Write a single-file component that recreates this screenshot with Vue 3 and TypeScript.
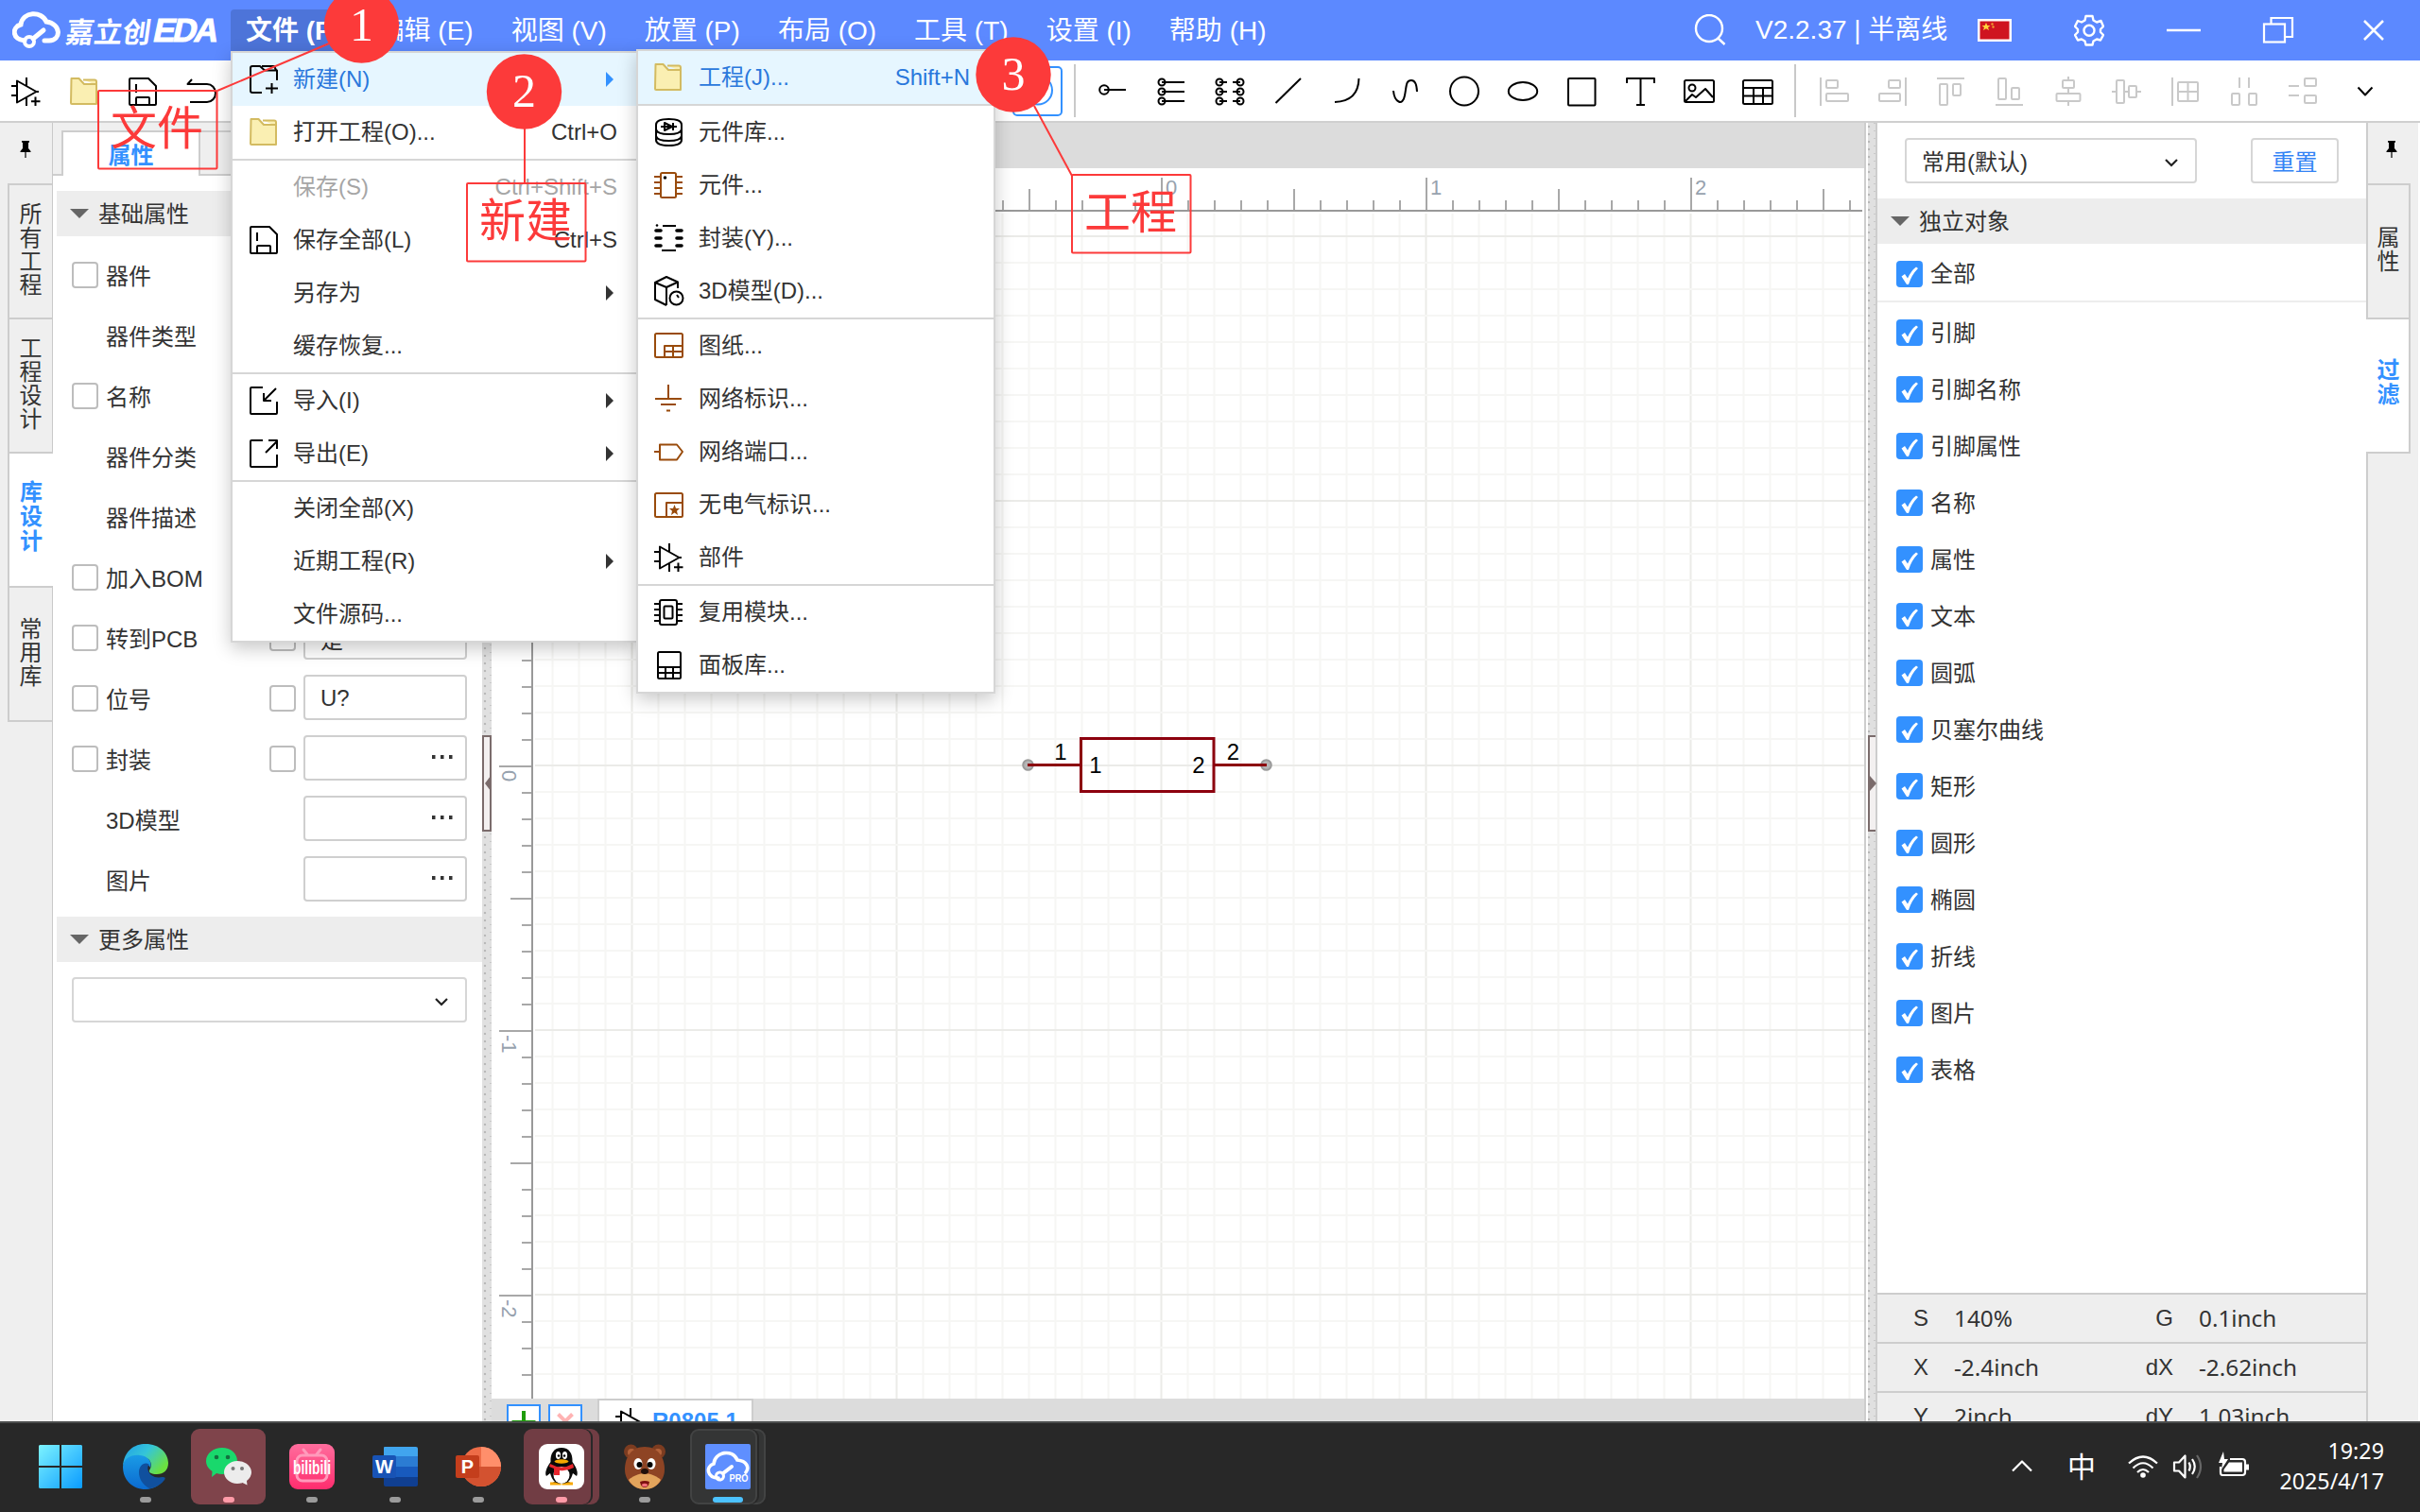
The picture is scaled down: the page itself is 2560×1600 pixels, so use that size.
<script setup lang="ts">
interface MenuItem {
  label: string
  icon?: string
  key?: string
  sub?: boolean
  active?: boolean
  disabled?: boolean
  divider?: boolean
}
interface PropRow {
  label: string
  check?: boolean
  check2?: boolean
  field?: 'text' | 'dots'
  value?: string
}

const opamp =
  '<path d="M7 4.5V27.5L27.5 16ZM1 10H7M1 20H7M17 1V10M17 22V31M27.5 16H30"/><path d="M26.5 21.5V31M22 26.3H31.5"/>'
const folder =
  '<path d="M15 3.5H27Q29 3.5 29 5.5V9" fill="#faefb2" stroke="#d3bb61"/><path d="M2.5 2H10.5L16 8H29V29H3Q2 29 2 28Z" fill="#faefb2" stroke="#d3bb61"/>'
const save =
  '<path d="M2 3Q2 2 3 2H22L30 10V29Q30 30 29 30H3Q2 30 2 29Z M9 30V23Q9 22 10 22H22Q23 22 23 23V30M9 8V17"/>'
const chipPins = 'M1 7H7M1 13H7M1 19H7M1 25H7M25 7H31M25 13H31M25 19H31M25 25H31'
const brown = (d: string) => `<g stroke="#994b0b">${d}</g>`

const icons: Record<string, string> = {
  opamp,
  folder,
  save,
  undo: '<path d="M6 3L1.5 8H22A9 9.5 0 0 1 22 27H4"/>',
  newproj: '<path d="M14 30H4Q2 30 2 28V4Q2 2 4 2H12L17 6.5H30V17M14 2H27L29 6M24.5 20V31M18 25.5H31"/>',
  import: '<path d="M15 2H3Q2 2 2 3V29Q2 30 3 30H29Q30 30 30 29V17M29 3L16 16M16 8V16H24"/>',
  export: '<path d="M15 2H3Q2 2 2 3V29Q2 30 3 30H29Q30 30 30 29V17M18 15L30 3M21 2H30V11"/>',
  lib: '<path d="M3 8Q3 2 16.500 2T30 8V24Q30 30 16.500 30T3 24ZM3 13Q4 18 16.500 18T30 13M3 20Q4 25 16.500 25T30 20M8 10H25M12 6V14L20 10ZM21 6V14"/>',
  chip: brown(`<rect x="8" y="3" width="16" height="26" rx="1.500"/><path d="${chipPins}"/>`) + '<circle cx="12.500" cy="8" r="1.800" fill="#000" stroke="none"/>',
  footprint:
    '<path d="M10 3H24M9 29H24"/><path d="M3 8H8M3 16H8M3 24H8M25 8H30M25 16H30M25 24H30" stroke-width="3.600" stroke-linecap="round"/><circle cx="4" cy="2.500" r="1.300" fill="#000" stroke="none"/>',
  model: '<path d="M14 31L2 25V7L14 1L26 6.500V13M2 7L14 12L26 6.500M14 12V31"/><circle cx="24.500" cy="23.500" r="7"/><path d="M25 20L27 23"/>',
  sheet: brown('<rect x="2" y="3" width="29" height="25" rx="1.500"/><path d="M12 28V16H31M12 22H31M21 16V28"/>'),
  ground: brown('<path d="M16 1V16M2 16H30M8 22H24M14 28.500H18"/>'),
  port: brown('<path d="M1 16H7M7 8.500H25L31 16L25 24.500H7Z"/>'),
  noelec: brown(
    '<rect x="2" y="4" width="29" height="25" rx="1.500"/><path d="M14 29V14H31"/><path d="M22.500 16L24 20H28L25 22.700L26 27L22.500 24.500L19 27L20 22.700L17 20H21Z" fill="#994b0b" stroke="none"/>',
  ),
  module: `<rect x="7" y="3" width="18" height="26" rx="2"/><rect x="11.500" y="9.500" width="9" height="13" rx="1"/><path d="${chipPins}"/>`,
  panel: '<rect x="5" y="2" width="24" height="28" rx="1.500"/><path d="M5 18H29M5 24H29M13 18V30M21 18V30"/>',
  pin: '<circle cx="7" cy="14" r="4.800"/><path d="M7 14H30"/>',
  pins: '<circle cx="6" cy="6" r="3.500"/><circle cx="6" cy="16" r="3.500"/><circle cx="6" cy="26" r="3.500"/><path d="M6 6H30M6 16H30M6 26H30"/>',
  pinarr:
    '<circle cx="5" cy="6" r="3.500"/><circle cx="5" cy="16" r="3.500"/><circle cx="5" cy="26" r="3.500"/><circle cx="27" cy="6" r="3.500"/><circle cx="27" cy="16" r="3.500"/><circle cx="27" cy="26" r="3.500"/><path d="M5 6H13M5 16H13M5 26H13M19 6H27M19 16H27M19 26H27"/>',
  line: '<path d="M2.500 28L29 2"/>',
  arc: '<path d="M3 27Q28 26 28.500 2"/>',
  bezier: '<path d="M3 15C4 27 13 32 15 20C17 10 16 4 22 4Q27.500 4 28 16"/>',
  circle: '<circle cx="16" cy="15.500" r="15"/>',
  ellipse: '<ellipse cx="16" cy="15.500" rx="15.200" ry="9.500"/>',
  rect: '<rect x="2" y="2" width="28.500" height="28.500" rx="1"/>',
  text: '<path d="M2 7V2H31V7M16.500 2V30M12 30H21"/>',
  image: '<rect x="1" y="4" width="31" height="23" rx="1.500"/><circle cx="9" cy="12" r="3.500"/><path d="M2 26L9 19L13 22L23 13L31 22"/>',
  table: '<rect x="1" y="4" width="31" height="25" rx="1.500"/><path d="M1 12H32M1 20.500H32M12 12V29M22 12V29"/>',
  al1: '<path d="M2 1V31"/><rect x="8" y="4" width="12" height="8" rx="1"/><rect x="8" y="18" width="23" height="8" rx="1"/>',
  al2: '<path d="M30 1V31"/><rect x="12" y="4" width="12" height="8" rx="1"/><rect x="2" y="18" width="22" height="8" rx="1"/>',
  al3: '<path d="M1 2H30"/><rect x="4" y="8" width="8" height="22" rx="1"/><rect x="18" y="8" width="8" height="12" rx="1"/>',
  al4: '<path d="M1 30H30"/><rect x="4" y="2" width="8" height="22" rx="1"/><rect x="18" y="12" width="8" height="12" rx="1"/>',
  al5: '<path d="M16 0V4M16 12V18M16 26V31"/><rect x="10" y="4" width="12" height="8" rx="1"/><rect x="3.500" y="18" width="25" height="8" rx="1"/>',
  al6: '<path d="M0 16H4M13 16H18M26 16H31"/><rect x="5" y="4" width="8" height="24" rx="1"/><rect x="18" y="10" width="8" height="12" rx="1"/>',
  al7: '<path d="M2 1V31"/><rect x="8" y="6" width="21" height="20" rx="1"/><path d="M18.500 6V26M8 16H29"/>',
  al8: '<path d="M11 1V12M21 1V12"/><rect x="3" y="18" width="8" height="12" rx="1"/><rect x="21" y="18" width="8" height="12" rx="1"/>',
  al9: '<path d="M1 10H12M1 20H12"/><rect x="18" y="2" width="12" height="8" rx="1"/><rect x="18" y="20" width="12" height="8" rx="1"/>',
  chev: '<path d="M8.500 11.500L16 19.500L23.500 11.500"/>',
}

const menus = ['编辑 (E)', '视图 (V)', '放置 (P)', '布局 (O)', '工具 (T)', '设置 (I)', '帮助 (H)']
const leftTools = ['opamp', 'folder', 'save', 'undo']
const drawTools = ['pin', 'pins', 'pinarr', 'line', 'arc', 'bezier', 'circle', 'ellipse', 'rect', 'text', 'image', 'table']
const alignTools = ['al1', 'al2', 'al3', 'al4', 'al5', 'al6', 'al7', 'al8', 'al9']

const fileMenu: MenuItem[] = [
  { label: '新建(N)', icon: 'newproj', sub: true, active: true },
  { label: '打开工程(O)...', icon: 'folder', key: 'Ctrl+O', divider: true },
  { label: '保存(S)', key: 'Ctrl+Shift+S', disabled: true },
  { label: '保存全部(L)', icon: 'save', key: 'Ctrl+S' },
  { label: '另存为', sub: true },
  { label: '缓存恢复...', divider: true },
  { label: '导入(I)', icon: 'import', sub: true },
  { label: '导出(E)', icon: 'export', sub: true, divider: true },
  { label: '关闭全部(X)' },
  { label: '近期工程(R)', sub: true },
  { label: '文件源码...' },
]
const newMenu: MenuItem[] = [
  { label: '工程(J)...', icon: 'folder', key: 'Shift+N', active: true, divider: true },
  { label: '元件库...', icon: 'lib' },
  { label: '元件...', icon: 'chip' },
  { label: '封装(Y)...', icon: 'footprint' },
  { label: '3D模型(D)...', icon: 'model', divider: true },
  { label: '图纸...', icon: 'sheet' },
  { label: '网络标识...', icon: 'ground' },
  { label: '网络端口...', icon: 'port' },
  { label: '无电气标识...', icon: 'noelec' },
  { label: '部件', icon: 'opamp', divider: true },
  { label: '复用模块...', icon: 'module' },
  { label: '面板库...', icon: 'panel' },
]
const popups = [
  { cls: 'file-menu', items: fileMenu },
  { cls: 'new-menu', items: newMenu },
]

const rows: PropRow[] = [
  { label: '器件', check: true },
  { label: '器件类型' },
  { label: '名称', check: true },
  { label: '器件分类' },
  { label: '器件描述' },
  { label: '加入BOM', check: true },
  { label: '转到PCB', check: true, check2: true, field: 'text', value: '是' },
  { label: '位号', check: true, check2: true, field: 'text', value: 'U?' },
  { label: '封装', check: true, check2: true, field: 'dots' },
  { label: '3D模型', field: 'dots' },
  { label: '图片', field: 'dots' },
]
const leftTabs = ['所有工程', '工程设计', '库设计', '常用库']
const rightTabs = ['属性', '过滤']
const filters = ['引脚', '引脚名称', '引脚属性', '名称', '属性', '文本', '圆弧', '贝塞尔曲线', '矩形', '圆形', '椭圆', '折线', '图片', '表格']
const status = [
  ['S', '140%', 'G', '0.1inch'],
  ['X', '-2.4inch', 'dX', '-2.62inch'],
  ['Y', '2inch', 'dY', '1.03inch'],
]

// Grid pitch is 28px; the origin sits at (1229, 811).
interface Tick { p: number; n: number }
function ticks(origin: number, from: number, to: number): Tick[] {
  const out: Tick[] = []
  for (let n = Math.ceil((from - origin) / 28); origin + n * 28 < to; n++) out.push({ p: origin + n * 28, n })
  return out
}
const xs = ticks(1229, 566, 1970)
const ys = ticks(811, 226, 1480)
const tickLen = (n: number) => (n % 10 === 0 ? 34 : n % 5 === 0 ? 22 : 10)
const xLabels = xs.filter((t) => t.n % 10 === 0 && t.n >= 0)
const yLabels = ys.filter((t) => t.n % 10 === 0 && t.n >= 0)

const notes = [
  { n: '1', cx: 382.5, cy: 27, x: 104, y: 96, text: '文件', d: 'M348 46L230 96' },
  { n: '2', cx: 554.5, cy: 97, x: 494, y: 194, text: '新建', d: 'M555 136V194' },
  { n: '3', cx: 1072, cy: 79, x: 1134, y: 185, text: '工程', d: 'M1094 112L1134 186' },
]
</script>

<template>
  <div class="screen">
    <header class="titlebar">
      <div class="brand">
        <svg width="52" height="40" viewBox="0 0 52 40">
          <path d="M13 31C0 30-1 17 9 14C11 0 31-1 36 11C52 13 52 31 39 31H34" fill="none" stroke="#fff" stroke-width="5" stroke-linecap="round" />
          <circle cx="18" cy="32" r="5" fill="none" stroke="#fff" stroke-width="4" />
          <path d="M22 29L33 20" stroke="#fff" stroke-width="5" stroke-linecap="round" />
        </svg>
        <span class="brand-cn">嘉立创</span><span class="brand-en">EDA</span>
      </div>
      <nav class="menus">
        <span class="menu on">文件 (F)</span>
        <span v-for="m in menus" :key="m" class="menu">{{ m }}</span>
      </nav>
      <div class="winbar">
        <svg class="search" width="34" height="34" viewBox="0 0 34 34" fill="none" stroke="#fff" stroke-width="2.4"><circle cx="16" cy="15" r="14" /><path d="M25.500 25.500L32.500 32" /></svg>
        <span class="version">V2.2.37 | 半离线</span>
        <svg class="flag" width="36" height="24" viewBox="0 0 36 24">
          <rect width="36" height="24" fill="#fff" /><rect x="2.500" y="2.500" width="31" height="19" fill="#cf1420" />
          <path d="M9 4L10.300 7H13.500L11 9L12 12L9 10.200L6 12L7 9L4.500 7H7.700Z" fill="#ffd43b" /><circle cx="15.500" cy="5.500" r="1.200" fill="#f0a030" /><circle cx="16.500" cy="8.500" r="1.200" fill="#f0a030" />
        </svg>
        <svg class="gear" width="32" height="34" viewBox="0 0 32 34" fill="none" stroke="#fff" stroke-width="2.4" stroke-linejoin="round">
          <path d="M12.500 2H19.500L20.500 6.500L24 8.500L28.500 7L31 13L28 16V19L31 22L28 27.500L24 26.500L20.500 28.500L19.500 32.500H12.500L11.500 28.500L8 26.500L4 27.500L1 22L4 19V16L1 13L4 7L8 8.500L11.500 6.500Z" />
          <circle cx="16" cy="17.300" r="5.500" />
        </svg>
        <svg class="min" width="36" height="4" viewBox="0 0 36 4"><path d="M0 2H36" stroke="#fff" stroke-width="2.500" /></svg>
        <svg class="rest" width="34" height="30" viewBox="0 0 34 30" fill="none" stroke="#fff" stroke-width="2.200"><rect x="2" y="8.500" width="22" height="19" /><path d="M9.500 8V2H32V22H24.500" /></svg>
        <svg class="close" width="24" height="24" viewBox="0 0 24 24"><path d="M2 2L22 22M22 2L2 22" stroke="#fff" stroke-width="2.500" /></svg>
      </div>
    </header>

    <div class="toolbar">
      <div class="tools first">
        <svg v-for="t in leftTools" :key="t" class="ic" viewBox="0 0 32 32" v-html="icons[t]" />
      </div>
      <div class="picked"><svg class="ic blue" viewBox="0 0 32 32" v-html="icons.circle" /></div>
      <i class="vsep" />
      <div class="tools draw">
        <svg v-for="t in drawTools" :key="t" class="ic" viewBox="0 0 32 32" v-html="icons[t]" />
      </div>
      <i class="vsep" />
      <div class="tools align">
        <svg v-for="t in alignTools" :key="t" class="ic pale" viewBox="0 0 32 32" v-html="icons[t]" />
      </div>
      <svg class="ic more" viewBox="0 0 32 32" v-html="icons.chev" />
    </div>

    <main class="work">
      <aside class="rail left">
        <svg class="tack" width="12" height="20" viewBox="0 0 12 20"><path d="M2 1H10V2.500L9 3V9L11.500 12V13H6.600V19H5.400V13H.5V12L3 9V3L2 2.500Z" /></svg>
        <div v-for="t in leftTabs" :key="t" class="vtab" :class="{ on: t === '库设计' }"><span>{{ t }}</span></div>
      </aside>

      <section class="props">
        <div class="ptabs"><i class="lead" /><span class="ptab">属性</span><i class="rest-tabs" /></div>
        <div class="group g1"><i class="tri" /><span>基础属性</span></div>
        <div class="rows">
          <div v-for="r in rows" :key="r.label" class="row">
            <i class="cb" :class="{ off: !r.check }" />
            <span class="rl">{{ r.label }}</span>
            <i v-if="r.field" class="cb two" :class="{ off: !r.check2 }" />
            <div v-if="r.field" class="field">
              <span v-if="r.value">{{ r.value }}</span>
              <svg v-if="r.field === 'dots'" class="dots" width="22" height="4" viewBox="0 0 22 4"><path d="M0 0H3.500V4H0ZM9 0H12.500V4H9ZM18 0H21.500V4H18Z" fill="#333" /></svg>
            </div>
          </div>
        </div>
        <div class="group g2"><i class="tri" /><span>更多属性</span></div>
        <div class="select wide"><svg width="16" height="10" viewBox="0 0 16 10"><path d="M2 2L8 8L14 2" /></svg></div>
      </section>

      <div class="split"><div class="grip"><i class="tri-l" /></div></div>

      <section class="center">
        <div class="strip" />
        <svg class="canvas" viewBox="520 178 1452 1302" width="1452" height="1302">
          <rect x="520" y="178" width="1452" height="1302" fill="#fff" />
          <g stroke-width="2">
            <path v-for="t in xs" :key="'gx' + t.n" :d="`M${t.p - 0.5} 226V1480`" :stroke="t.n % 10 ? '#f6f6f4' : '#ebebe8'" />
            <path v-for="t in ys" :key="'gy' + t.n" :d="`M566 ${t.p - 1}H1972`" :stroke="t.n % 10 ? '#f6f6f4' : '#ebebe8'" />
          </g>
          <g stroke="#a8a8a8" stroke-width="2">
            <path v-for="t in xs" :key="'tx' + t.n" :d="`M${t.p} 222V${222 - tickLen(t.n)}`" />
            <path v-for="t in ys" :key="'ty' + t.n" :d="`M562 ${t.p}H${562 - tickLen(t.n)}`" />
            <path d="M563 223V1480M563 223H1970" stroke="#999" />
          </g>
          <g class="rule-text">
            <text v-for="t in xLabels" :key="'lx' + t.n" :x="t.p + 4" y="206">{{ t.n / 10 }}</text>
            <text v-for="t in yLabels" :key="'ly' + t.n" :transform="`translate(530.5 ${t.p + 4}) rotate(90)`">{{ -t.n / 10 || 0 }}</text>
          </g>
          <g stroke="#8c000e" stroke-width="3" fill="none">
            <g fill="#b5b5b5" stroke="#9a9a9a" stroke-width="2"><circle cx="1087.500" cy="809.500" r="5.300" /><circle cx="1339.500" cy="809.500" r="5.300" /></g>
            <rect x="1143.500" y="781.500" width="140.500" height="56" />
            <path d="M1087 809.500H1143M1284 809.500H1340" />
          </g>
          <g class="pin-text">
            <text x="1122" y="804">1</text><text x="1159" y="818">1</text>
            <text x="1268" y="818">2</text><text x="1304.500" y="804">2</text>
          </g>
        </svg>
        <div class="pages">
          <span class="pbtn"><svg width="32" height="32" viewBox="0 0 32 32"><path d="M16 5V29M3.500 17H28.500" stroke="#1f9c0c" stroke-width="4" /></svg></span>
          <span class="pbtn"><svg width="32" height="32" viewBox="0 0 32 32"><path d="M8.500 8.500L23.500 23.500M23.500 8.500L8.500 23.500" stroke="#ffb3b3" stroke-width="4" /></svg></span>
          <span class="page"><svg class="ic" viewBox="0 0 32 32" v-html="icons.opamp" /><b>R0805.1</b></span>
        </div>
      </section>

      <div class="split right"><div class="grip"><i class="tri-r" /></div></div>

      <section class="filter">
        <div class="ftop">
          <div class="select"><span>常用(默认)</span><svg width="16" height="10" viewBox="0 0 16 10"><path d="M2 2L8 8L14 2" /></svg></div>
          <button class="reset">重置</button>
        </div>
        <div class="group g3"><i class="tri" /><span>独立对象</span></div>
        <div class="frow all"><i class="ck"><svg viewBox="0 0 28 28"><path d="M5.500 16.500L9 14L12 18.500Q16 10 21 6.500L23 8Q16 15 13 25H11Z" fill="#fff" /></svg></i><span>全部</span></div>
        <div class="flist">
          <div v-for="f in filters" :key="f" class="frow"><i class="ck"><svg viewBox="0 0 28 28"><path d="M5.500 16.500L9 14L12 18.500Q16 10 21 6.500L23 8Q16 15 13 25H11Z" fill="#fff" /></svg></i><span>{{ f }}</span></div>
        </div>
        <div class="status">
          <div v-for="s in status" :key="s[0]" class="srow">
            <span class="k">{{ s[0] }}</span><span class="v">{{ s[1] }}</span><span class="k k2">{{ s[2] }}</span><span class="v v2">{{ s[3] }}</span>
          </div>
        </div>
      </section>

      <aside class="rail right-rail">
        <svg class="tack" width="12" height="20" viewBox="0 0 12 20"><path d="M2 1H10V2.500L9 3V9L11.500 12V13H6.600V19H5.400V13H.5V12L3 9V3L2 2.500Z" /></svg>
        <div v-for="t in rightTabs" :key="t" class="vtab" :class="{ on: t === '过滤' }"><span>{{ t }}</span></div>
        <i class="rail-rest" />
      </aside>
    </main>

    <footer class="taskbar">
      <div class="apps">
        <div class="app"><svg width="46" height="46" viewBox="0 0 46 46">
          <defs><linearGradient id="win" x1="0" y1="0" x2="1" y2="1" gradientUnits="objectBoundingBox"><stop offset="0" stop-color="#7df3ff" /><stop offset="1" stop-color="#0a9bff" /></linearGradient></defs>
          <path d="M1 0H22V22H0V1ZM24 0H45L46 1V22H24ZM0 24H22V46H1L0 45ZM24 24H46V45L45 46H24Z" fill="url(#win)" /></svg></div>
        <div class="app"><svg width="48" height="48" viewBox="0 0 48 48">
          <defs>
            <linearGradient id="eg1" x1="0" y1="0" x2="1" y2=".6"><stop offset="0" stop-color="#1f9de8" /><stop offset=".5" stop-color="#35c5d8" /><stop offset="1" stop-color="#6be03f" /></linearGradient>
            <linearGradient id="eg2" x1="0" y1="0" x2="0" y2="1"><stop offset="0" stop-color="#1a9be6" /><stop offset="1" stop-color="#0b6ad0" /></linearGradient>
          </defs>
          <path d="M0 24C1 7 12 0 24 0C39 0 48 10 48 20C48 28 43 32 36 32C30 32 27 30 28 28C32 22 30 14 18 13C8 12 2 17 0 24Z" fill="url(#eg1)" />
          <path d="M0 24C1 15 9 11 18 12C27 13 31 19 29 25C26 19 18 21 18 30C19 38 28 43 44 36C40 43 33 48 24 48C10 48 0 38 0 24Z" fill="url(#eg2)" />
          <path d="M17 30C17 23 23 18 28 22C24 24 27 38 42 35Q46 35 44 38C38 46 30 47 28 47C21 43 17 37 17 30Z" fill="#10509e" /></svg><i class="dot" /></div>
        <div class="app"><i class="tile red" /><svg width="48" height="40" viewBox="0 0 48 40">
          <path d="M17 0C26 0 33 6 33 14S26 28 17 28Q14 28 11 27L6 31L6.500 25C2 22 0 18 0 14C0 6 8 0 17 0Z" fill="#19d86c" /><circle cx="11" cy="10" r="2.300" fill="#13703f" /><circle cx="23" cy="10" r="2.300" fill="#13703f" />
          <path d="M33 14C41 14 48 19 48 26Q48 31 43 35L43.500 39.500L38.500 37Q36 38 33 38C25 38 19 32 19 26S25 14 33 14Z" fill="#ececec" /><circle cx="28.500" cy="22" r="2" fill="#777" /><circle cx="38" cy="22" r="2" fill="#777" /></svg><i class="dot pink" /></div>
        <div class="app"><svg width="48" height="48" viewBox="0 0 48 48"><defs><linearGradient id="bl" x1="0" y1="0" x2="0" y2="1"><stop offset="0" stop-color="#ff6d9d" /><stop offset="1" stop-color="#ff2d6e" /></linearGradient></defs>
          <rect width="48" height="48" rx="9" fill="url(#bl)" /><rect x="8" y="12" width="32" height="27" rx="6" fill="none" stroke="#ff9abb" stroke-width="3" /><path d="M15 6L19 11M33 6L29 11" stroke="#ff9abb" stroke-width="3" stroke-linecap="round" />
          <text x="24" y="32" text-anchor="middle" class="bili" textLength="40" lengthAdjust="spacingAndGlyphs">bilibili</text></svg><i class="dot" /></div>
        <div class="app"><svg width="48" height="44" viewBox="0 0 48 44"><path d="M12 2Q12 1 13 1H46Q48 1 48 3V11H12Z" fill="#41a5ee" /><path d="M12 11H48V22H12Z" fill="#2b7cd3" /><path d="M12 22H48V33H12Z" fill="#185abd" /><path d="M12 33H48V41Q48 43 46 43H14Q12 43 12 41Z" fill="#103f91" />
          <rect y="10" width="25" height="24" rx="2" fill="#1853b5" /><text x="12.500" y="29" text-anchor="middle" class="office">W</text></svg><i class="dot" /></div>
        <div class="app"><svg width="48" height="44" viewBox="0 0 48 44"><circle cx="27" cy="22" r="21" fill="#ed6c47" /><path d="M27 1A21 21 0 0 1 48 22H27Z" fill="#ff8f6b" /><path d="M6 22H48A21 21 0 0 1 6 22Z" fill="#d35230" />
          <rect y="10" width="25" height="24" rx="2" fill="#c43e1c" /><text x="12.500" y="29" text-anchor="middle" class="office">P</text></svg><i class="dot" /></div>
        <div class="app"><i class="tile qq back" /><i class="tile qq" /><svg width="48" height="48" viewBox="0 0 48 48"><rect width="48" height="48" rx="9" fill="#fff" />
          <path d="M12 42H22V38M36 42H26V38" stroke="#f7a800" stroke-width="3" /><path d="M24 4C16 4 12 10 12.500 19C8 25 6 31 8 34L12 31C14 38 17 42 24 42S34 38 36 31L40 34C42 31 40 25 35.500 19C36 10 32 4 24 4Z" fill="#0a0a0a" /><ellipse cx="24" cy="33" rx="8.500" ry="9" fill="#fff" />
          <path d="M12 21Q24 28 36 21L37 25Q30 29 22 28V33H16V26L11 24Z" fill="#e8252c" /><ellipse cx="20.500" cy="12" rx="2.600" ry="4" fill="#fff" /><ellipse cx="27.500" cy="12" rx="2.600" ry="4" fill="#fff" /><circle cx="21" cy="12.500" r="1.300" /><circle cx="27" cy="12.500" r="1.300" /><ellipse cx="24" cy="18.500" rx="7.500" ry="2.200" fill="#f7a800" /></svg><i class="dot pink" /></div>
        <div class="app"><svg width="44" height="48" viewBox="0 0 44 48"><circle cx="7.500" cy="8" r="7.500" fill="#7c3c20" /><circle cx="36.500" cy="8" r="7.500" fill="#7c3c20" /><circle cx="8" cy="9" r="4" fill="#b3623a" /><circle cx="36" cy="9" r="4" fill="#b3623a" />
          <path d="M22 3C36 3 43 14 43 27C43 40 32 48 22 48S1 40 1 27C1 14 8 3 22 3Z" fill="#8e4424" /><path d="M22 31C29 31 36 35 39 38C36 44 30 48 22 48S8 44 5 38C8 35 15 31 22 31Z" fill="#e2a45c" />
          <ellipse cx="15" cy="21" rx="4.500" ry="6" fill="#fff" /><ellipse cx="29" cy="21" rx="4.500" ry="6" fill="#fff" /><circle cx="16.500" cy="22" r="3" /><circle cx="27.500" cy="22" r="3" /><ellipse cx="22" cy="29" rx="4" ry="3" fill="#20100a" /><path d="M17 40Q22 38 27 40Q26 46 22 46T17 40Z" fill="#7d1010" /><ellipse cx="22" cy="43.500" rx="3" ry="1.800" fill="#f2707a" /></svg><i class="dot" /></div>
        <div class="app"><i class="tile eda back" /><i class="tile eda" /><svg width="48" height="48" viewBox="0 0 48 48"><rect width="48" height="48" rx="2" fill="#5f8fff" />
          <path d="M14 36C2 36 0 24 9 21C10 8 29 5 34 17C44 18 47 25 43 30" fill="none" stroke="#fff" stroke-width="3.600" stroke-linecap="round" /><circle cx="15.500" cy="34" r="4" fill="none" stroke="#fff" stroke-width="3" /><path d="M19 31L28 24" stroke="#fff" stroke-width="4" stroke-linecap="round" />
          <text x="35.500" y="40" text-anchor="middle" class="pro" textLength="20" lengthAdjust="spacingAndGlyphs">PRO</text></svg><i class="dot wide" /></div>
      </div>
      <div class="tray">
        <svg class="up" width="24" height="14" viewBox="0 0 24 14"><path d="M2 12.500L12 2.500L22 12.500" /></svg>
        <span class="ime">中</span>
        <svg class="wifi" width="34" height="26" viewBox="0 0 34 26"><path d="M2 9.500Q17-4.500 32 9.500M6.500 14.500Q17 4 27.500 14.500M11 19Q17 13 23 19" /><circle cx="17" cy="22" r="2.800" fill="#fff" stroke="none" /></svg>
        <svg class="snd" width="34" height="28" viewBox="0 0 34 28"><path d="M2 9.500H7L13.500 2.500V25.500L7 18.500H2ZM17.500 9.500Q20 14 17.500 18.500M21 6Q26.500 14 21 22" /><path d="M26 2Q34 14 26 26" stroke="#666" /></svg>
        <svg class="bat" width="34" height="28" viewBox="0 0 34 28"><path d="M12 8H25Q28 8 28 11V22Q28 25 25 25H4Q2 25 2 22V16" /><path d="M11 11.500H25V21.500H5.500V19Z" fill="#fff" stroke="none" /><path d="M28.500 13.500H32V19.500H28.500Z" fill="#fff" stroke="none" /><path d="M5 0L0 12H4L3 19L10 8H6Z" fill="#fff" stroke="none" /></svg>
        <div class="clock"><span>19:29</span><span>2025/4/17</span></div>
      </div>
    </footer>

    <div v-for="p in popups" :key="p.cls" class="popup" :class="p.cls">
      <div v-for="m in p.items" :key="m.label" class="item" :class="{ hot: m.active, dim: m.disabled, line: m.divider }">
        <svg class="ic" viewBox="0 0 32 32" v-html="m.icon ? icons[m.icon] : ''" />
        <span class="il">{{ m.label }}</span>
        <span v-if="m.key" class="kb">{{ m.key }}</span>
        <i v-if="m.sub" class="sub" />
      </div>
    </div>

    <svg class="notes" width="2560" height="1600" viewBox="0 0 2560 1600">
      <g v-for="a in notes" :key="a.n">
        <path :d="a.d" stroke="#fc3a3a" stroke-width="2" />
        <circle :cx="a.cx" :cy="a.cy" r="39.700" fill="#fc3a3a" />
        <text :x="a.cx" :y="a.cy + 16" class="num">{{ a.n }}</text>
        <rect :x="a.x" :y="a.y" width="125.500" height="82.500" rx="1" fill="none" stroke="#fc3a3a" stroke-width="2" />
        <text :x="a.x + 62" :y="a.y + 57" class="cap">{{ a.text }}</text>
      </g>
    </svg>
  </div>
</template>

<style>
body { margin: 0; overflow: hidden; }
</style>

<style scoped>
.screen {
  width: 2560px; height: 1600px; position: relative; overflow: hidden;
  display: flex; flex-direction: column; background: #fff; color: #333;
  font: 24px "Liberation Sans", "Noto Sans CJK SC", sans-serif; white-space: nowrap;
}
.screen * { box-sizing: border-box; }
svg { display: block; flex: none; }
i { display: block; font-style: normal; flex: none; }
.ic { width: 32px; height: 32px; fill: none; stroke: #000; stroke-width: 2; stroke-linejoin: round; overflow: visible; }
.ic.pale { stroke: #c9c9c9; }
.ic.blue { stroke: #3391ff; }

.titlebar { height: 64px; flex: none; background: #5c89ff; color: #fff; display: flex; font-size: 28px; }
.brand { width: 240px; padding-left: 13px; display: flex; align-items: center; }
.brand-cn { margin-left: 5px; font-size: 30px; font-weight: 700; transform: skewX(-8deg); }
.brand-en { margin-left: 3px; font-size: 35px; font-weight: 700; letter-spacing: -2.5px; transform: skewX(-12deg); -webkit-text-stroke: 1px #fff; }
.menus { display: flex; gap: 8px; margin-left: 4px; padding-top: 10px; height: 54px; }
.menu { padding: 2px 16px 0; line-height: 42px; height: 44px; border-radius: 4px 4px 0 0; }
.menu.on { background: #4d74d9; font-weight: 700; }
.winbar { margin-left: auto; width: 768px; display: flex; align-items: center; }
.version { margin-left: 31px; width: 204px; line-height: 40px; }
.flag { margin-left: 31px; }
.gear { margin-left: 66px; }
.min { margin-left: 66px; }
.rest { margin-left: 65px; }
.close { margin-left: 72px; }

.toolbar { height: 66px; flex: none; border-bottom: 2px solid #cfcfcf; background: #fff; display: flex; align-items: center; }
.toolbar > .tools, .toolbar > .more { padding-top: 1px; box-sizing: content-box; }
.tools { display: flex; gap: 30px; }
.tools.first { width: 1060px; padding-left: 11px; }
.picked { width: 53px; height: 53px; border: 2px solid #3391ff; border-radius: 5px; display: flex; align-items: center; justify-content: center; margin-right: 12px; }
.vsep { width: 2px; height: 56px; background: #c9c9c9; }
.tools.draw { margin-left: 23px; margin-right: 23px; }
.tools.align { margin-left: 24px; }
.more { margin-left: 34px; }

.work { height: 1374px; flex: none; display: flex; overflow: hidden; }
.rail { background: #efefef; position: relative; }
.rail.left { width: 56px; padding-left: 8px; border-right: 1px solid #c9c9c9; }
.tack { margin: 18px 0 26px 13px; }
.vtab { height: 142px; border: 2px solid #cdcdcd; border-bottom: 0; border-right: 0; display: flex; align-items: center; justify-content: center; padding-bottom: 4px; }
.left .vtab:last-child { height: 144px; border-bottom: 2px solid #cdcdcd; }
.vtab span { width: 24px; line-height: 25px; white-space: normal; }
.vtab.on { background: #fff; color: #3391ff; font-weight: 700; padding-bottom: 6px; }
.vtab.on span { line-height: 26px; }
.left .vtab.on { margin-right: -1px; }
.right-rail { width: 57px; display: flex; flex-direction: column; border-right: 2px solid #fff; }
.right-rail .tack { margin-left: 21px; }
.right-rail::before { content: ""; position: absolute; left: 0; top: 0; width: 2px; height: 206px; background: #cdcdcd; }
.right-rail .vtab { width: 47px; border-left: 0; border-right: 2px solid #cdcdcd; flex: none; padding-left: 2px; }
.rail-rest { flex: 1; border-left: 2px solid #cdcdcd; }
.rail-rest::before { content: ""; display: block; width: 45px; height: 2px; background: #cdcdcd; }

.props { width: 454px; background: #fff; }
.ptabs { height: 56px; display: flex; background: #efefef; }
.lead { width: 9px; border-bottom: 2px solid #cdcdcd; }
.ptab { width: 147px; margin-top: 8px; background: #fff; border: 2px solid #cdcdcd; border-bottom: 0; color: #3391ff; font-weight: 700; text-align: center; line-height: 49px; height: 48px; }
.rest-tabs { flex: 1; margin-top: 8px; border-top: 2px solid #cdcdcd; border-bottom: 2px solid #cdcdcd; }
.group { height: 48px; flex: none; background: #ededed; margin-left: 4px; padding-left: 14px; display: flex; align-items: center; }
.group span { padding-bottom: 3px; }
.g1 { margin-top: 16px; }
.g2 { margin-top: 7px; }
.tri { border: 10px solid transparent; border-top-color: #666; border-bottom: 0; margin-right: 10px; }
.rows { padding-top: 9px; }
.row { height: 64px; padding-left: 20px; display: flex; align-items: center; }
.cb { width: 28px; height: 28px; border: 2px solid #bdbdbd; border-radius: 4px; background: #fff; }
.cb.off { visibility: hidden; }
.rl { width: 173px; margin-left: 8px; padding-bottom: 2px; }
.cb.two { margin-right: 8px; }
.field { width: 173px; height: 48px; margin-bottom: 2px; border: 2px solid #cfcfcf; border-radius: 4px; padding: 0 13px 0 16px; display: flex; align-items: center; }
.field span { padding-top: 2px; }
.dots { margin-left: auto; margin-bottom: 3px; }
.select { height: 48px; border: 2px solid #d6d6d6; border-radius: 4px; display: flex; align-items: center; padding: 0 17px 0 16px; }
.select span { padding-bottom: 2px; }
.select svg { margin-left: auto; fill: none; stroke: #222; stroke-width: 2.2; margin-top: 4px; }
.select.wide { margin: 16px 16px 0 20px; }

.split { width: 10px; background-color: #e0e0e0; background-image: radial-gradient(circle at 3px 4px, #b9b9b9 1.3px, transparent 1.6px), radial-gradient(circle at 9px 0, #c8c8c8 1.2px, transparent 1.5px); background-size: 10px 8px; padding-top: 648px; }
.grip { height: 102px; border: 2px solid #7b6c6c; background: #f3f0f0; display: flex; align-items: center; }
.tri-l { border: 8px solid transparent; border-right: 6px solid #7b6c6c; border-left: 0; margin-left: 1px; }
.split.right { width: 14px; border-left: 2px solid #cdcdcd; border-right: 2px solid #cdcdcd; background-clip: padding-box; box-shadow: inset 2px 0 #fff; }
.split.right .grip { border-right: 0; margin-left: 2px; }
.tri-r { border: 8px solid transparent; border-left: 7px solid #7b6c6c; border-right: 0; }

.center { width: 1452px; display: flex; flex-direction: column; }
.strip { height: 48px; background: #dcdcdc; }
.rule-text { font-size: 22px; fill: #97a2ae; }
.pin-text { font-size: 24px; fill: #000; text-anchor: middle; }
.pages { height: 24px; background: #dcdcdc; display: flex; padding-left: 16px; overflow: hidden; }
.pbtn { width: 36px; height: 36px; margin: 6px 8px 0 0; border: 2px solid #3391ff; background: #fff; flex: none; }
.page { margin-left: 8px; width: 165px; height: 44px; flex: none; background: #fff; border: 2px solid #cdcdcd; display: flex; align-items: center; padding: 0 0 0 16px; color: #3391ff; }
.page .ic { margin-top: 5px; }
.page b { margin-left: 8px; margin-top: 4px; line-height: 24px; }

.filter { width: 517px; background: #fff; display: flex; flex-direction: column; }
.ftop { display: flex; flex: none; padding: 16px 0 0 29px; }
.ftop .select { width: 309px; }
.reset { margin-left: 57px; width: 93px; height: 48px; border: 2px solid #d6d6d6; border-radius: 4px; background: #fff; color: #3383f5; font: inherit; padding: 0 0 2px; }
.g3 { margin: 16px 0 0 0; }
.frow { height: 60px; flex: none; padding-left: 20px; display: flex; align-items: center; }
.frow span { padding-bottom: 4px; }
.frow.all { height: 62px; border-bottom: 2px solid #ededed; padding-top: 3px; }
.ck { width: 28px; height: 28px; border-radius: 4px; background: #3391ff; margin-right: 8px; }
.flist { padding-top: 2px; flex: none; height: 1048px; }
.status { background: #eee; flex: none; }
.srow { height: 52px; flex: none; border-top: 2px solid #cdcdcd; display: flex; align-items: center; padding: 0 0 2px 20px; }
.k { width: 34px; flex: none; text-align: right; padding-top: 1px; }
.v { width: 196px; flex: none; margin-left: 27px; font: 24.3px "Noto Sans", sans-serif; }
.v2 { width: 170px; }
.k2 { width: 36px; }

.taskbar { height: 96px; flex: none; background: #282828; border-top: 2px solid #4b4d4d; display: flex; justify-content: space-between; position: relative; }
.apps { display: flex; padding-left: 20px; }
.app { width: 88px; height: 94px; position: relative; display: flex; align-items: center; justify-content: center; }
.app svg { position: relative; margin-top: -2px; }
.app:first-child { margin-right: 2px; }
.dot { position: absolute; left: 38px; bottom: 10px; width: 12px; height: 6px; border-radius: 3px; background: #9b9b9b; }
.dot.pink { background: #ff9ba8; }
.dot.wide { left: 28px; width: 32px; background: #4cc2ff; }
.tile { position: absolute; left: 4px; top: 6px; width: 79px; height: 80px; border-radius: 9px; background: #7f444b; }
.tile.qq, .tile.eda { width: 71px; background: #713d44; box-shadow: 2px 0 #282828; }
.tile.back { left: 13px; }
.tile.eda { background: #343535; border: 2px solid #424343; }
.bili { font: 700 20px "Liberation Sans", sans-serif; fill: #fff; }
.office { font: 700 20px "Liberation Sans", sans-serif; fill: #fff; }
.pro { font: 700 11px "Liberation Sans", sans-serif; fill: #fff; }
.tray { width: 432px; display: flex; align-items: center; color: #fff; fill: none; stroke: #fff; stroke-width: 2.2; stroke-linejoin: round; }
.up { margin-top: -4px; margin-left: -1px; }
.ime { width: 30px; margin-left: 36px; font-size: 30px; padding-bottom: 7px; }
.wifi { margin-left: 33px; margin-top: -3px; }
.snd { margin-left: 14px; margin-top: -2px; }
.bat { margin-left: 15px; margin-top: -7px; }
.clock { margin-left: auto; margin-right: 38px; font: 23.3px/32px "Noto Sans", sans-serif; text-align: right; display: flex; flex-direction: column; margin-top: -4px; }

.popup { position: absolute; background: #fff; border: 2px solid #d6d6d6; box-shadow: 0 6px 18px rgba(0, 0, 0, .22); }
.file-menu { left: 244px; top: 54px; width: 431px; }
.new-menu { left: 673px; top: 52px; width: 380px; }
.item { height: 56px; display: flex; align-items: center; padding: 0 20px 0 17px; box-sizing: border-box; }
.item.line { height: 58px; border-bottom: 2px solid #d6d6d6; }
.item.hot { background: #e6f6ff; color: #2a78dc; }
.item.dim { color: #a6a6a6; }
.il { margin-left: 15px; padding-bottom: 5px; }
.kb { margin-left: auto; }
.new-menu .item { padding: 0 25px 0 16px; }
.new-menu .il { margin-left: 16px; }
.sub { margin-left: auto; margin-right: 4px; border: 8px solid transparent; border-left: 8px solid #333; border-right: 0; }
.hot .sub { border-left-color: #3391ff; }

.notes { position: absolute; left: 0; top: 0; pointer-events: none; }
.num { font: 50px "Liberation Serif", serif; fill: #fff; text-anchor: middle; }
.cap { font: 49px "Noto Sans CJK SC", sans-serif; fill: #fc3a3a; text-anchor: middle; }
</style>
